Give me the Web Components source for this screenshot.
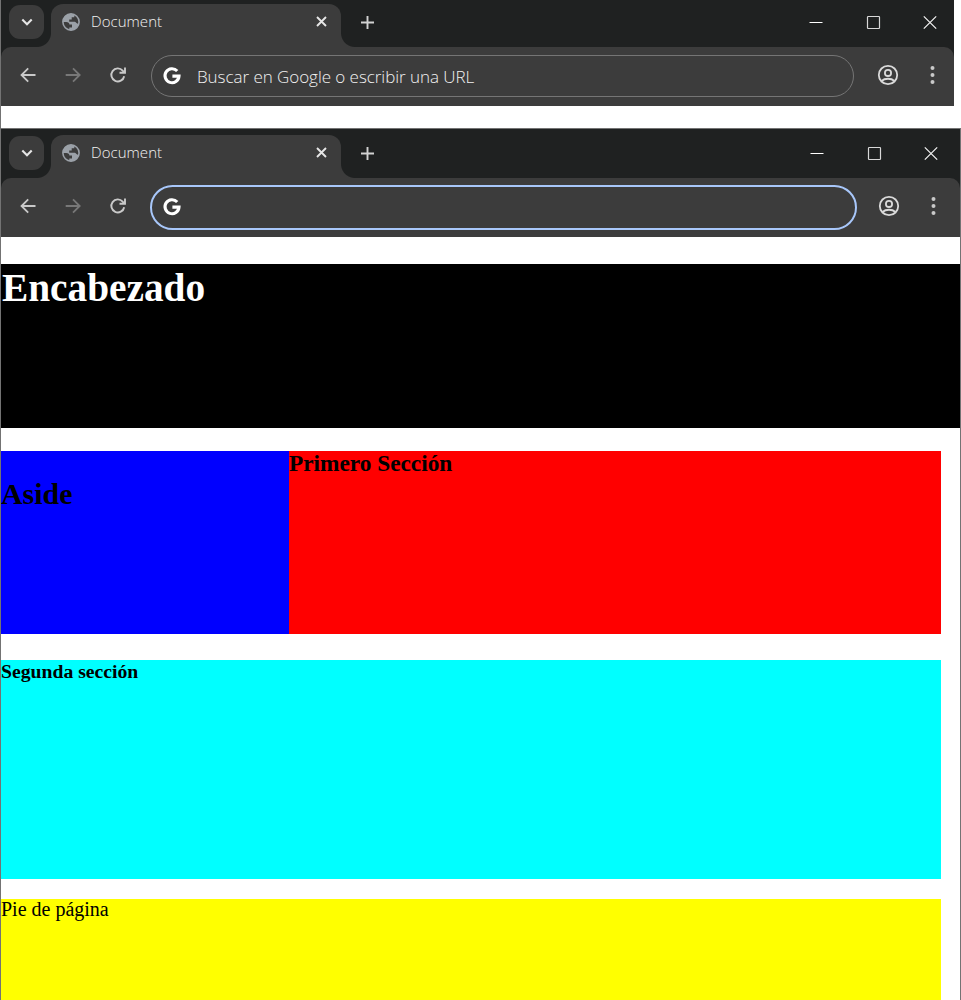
<!DOCTYPE html>
<html lang="es"><head><meta charset="utf-8"><title>Document</title>
<style>html,body{margin:0;height:1000px;overflow:hidden;background:#fff}</style></head>
<body>
<desk-view></desk-view>
<template id="chrome-t">
<style>
:host{display:block;height:108px;background:#3c3c3c;font-family:"Open Sans","Noto Sans",sans-serif;font-weight:300;color:#f2f2f2;overflow:hidden}
*{box-sizing:border-box}
svg{display:block;flex:none;overflow:visible}
.strip{display:flex;height:49px;padding-left:8px;background:#1f2121}
.down{width:35px;height:34px;margin-top:7px;border-radius:11px;background:#3c3c3c;display:grid;place-items:center}
.tab{position:relative;width:290px;height:43px;margin:6px 0 0 7px;border-radius:12px 12px 0 0;background:#3c3c3c;display:flex;align-items:center;padding:0 14.5px 7px 11px}
.tab:before,.tab:after{content:"";position:absolute;bottom:0;width:14px;height:14px}
.tab:before{left:-14px;background:radial-gradient(circle at 0 0,transparent 13.5px,#3c3c3c 14.5px)}
.tab:after{right:-14px;background:radial-gradient(circle at 100% 0,transparent 13.5px,#3c3c3c 14.5px)}
.title{font-size:15px;line-height:20px;margin-left:11px;padding-bottom:2px;flex:1;white-space:nowrap;letter-spacing:.05px}
.tab .close{margin-top:-1px}
.plus{margin:17.5px 0 0 19.5px}
.win{margin:16px 17px 0 auto;display:flex;gap:42.5px}
:host([focused]) .win{margin-right:22px}
.corner{background:#1f2121}
.bar{height:59px;background:#3c3c3c;border-radius:10px 10px 0 0;display:flex;align-items:center;padding:0 17px 1px 18px}
:host([focused]) .bar{padding-right:22px}
.nav{display:flex;gap:25px;margin:0 1px 1.5px -1px}
.url{flex:1;height:42px;margin:0 22.5px 0 22px;border:1.5px solid #757575;border-radius:21px;display:flex;align-items:center;padding-left:11px;font-size:17px;white-space:nowrap}
:host([focused]) .url{height:45px;margin:0 20.5px 0 21px;border:2.5px solid #a8c7fa;border-radius:23px}
.url span{margin-left:16px;letter-spacing:-.05px}
.end{display:flex;gap:29.5px;align-items:center;margin-bottom:1.5px}
</style>
<div class="corner"><div class="strip">
<div class="down"><svg width="12" height="8" viewBox="0 0 12 8" fill="none" stroke="#e6e6e6" stroke-width="2.1"><path d="M1.3 1.5 6 6.2l4.7-4.7"/></svg></div>
<div class="tab"><svg width="18" height="18" viewBox="0 0 18 18"><circle cx="9" cy="9" r="8.1" fill="none" stroke="#9ba1a8" stroke-width="1.6"/><path fill="#9ba1a8" d="M7.2 1.1C3.2 2 .8 5 .8 9h3.5c2 0 3.1 1 3.1 2.4H10v3H7.3v2.5c5.2 1.1 9-1.9 9.6-6.5-.9.6-1.7.2-2.4-.4-.8-.9-1.4-1.3-3.1-1.2H7.2V6.5h2.5V4.2h2.6V1.7C10.6.9 9 .7 7.2 1.1z"/></svg>
<span class="title"><slot name="title"></slot></span>
<svg class="close" width="11" height="11" viewBox="0 0 11 11" stroke="#e6e6e6" stroke-width="1.9"><path d="m1 1 9 9M10 1l-9 9"/></svg></div>
<svg class="plus" width="13" height="13" viewBox="0 0 13 13" stroke="#d2d2d2" stroke-width="1.9"><path d="M6.5 0v13M0 6.5h13"/></svg>
<div class="win">
<svg width="14" height="15" viewBox="0 0 14 15" stroke="#fff"><path d="M.5 8.5h13"/></svg>
<svg width="15" height="15" viewBox="0 0 15 15" fill="none" stroke="#d8d8d8" stroke-width="1.2"><rect x="1.5" y="2.5" width="12" height="12" rx=".7"/></svg>
<svg width="14" height="15" viewBox="0 0 14 15" stroke="#f4f4f4" stroke-width="1.2"><path d="m.8 2.3 12.4 12.4M13.2 2.3.8 14.7"/></svg>
</div></div>
<div class="bar"><div class="nav">
<svg width="20" height="20" viewBox="0 0 20 20" fill="none" stroke="#c9c9c9" stroke-width="1.8"><path d="M17.5 10H3.5M10.2 3.3 3.5 10l6.7 6.7"/></svg>
<svg width="20" height="20" viewBox="0 0 20 20" fill="none" stroke="#787878" stroke-width="1.8"><path d="M2.7 10h13.5M10 3.3l6.7 6.7-6.7 6.7"/></svg>
<svg width="20" height="20" viewBox="0 0 20 20" fill="none" stroke="#c9c9c9" stroke-width="1.9"><path d="M16.2 11.2A6.5 6.5 0 1 1 14.7 5.6l2 2M17 2.6v5.2h-5.5"/></svg></div>
<div class="url"><svg width="18" height="18" viewBox="0 0 18 18" fill="none" stroke="#fff" stroke-width="3.1"><path d="M14.2 4A7 7 0 1 0 16 9.1H9.4"/></svg><span><slot></slot></span></div>
<div class="end"><svg width="22" height="22" viewBox="0 0 22 22" fill="none" stroke="#dadada" stroke-width="1.8"><circle cx="11" cy="11" r="9.2"/><circle cx="11" cy="8.9" r="3.1"/><path d="M4.5 17c3.5-3 9.5-3 13 0"/></svg>
<svg width="9" height="20" viewBox="0 0 9 20" fill="#c9c9c9"><circle cx="4.5" cy="3" r="2"/><circle cx="4.5" cy="10" r="2"/><circle cx="4.5" cy="17" r="2"/></svg></div>
</div></div>
</template>
<template id="block-t">
<style>
:host{display:block;box-sizing:border-box;overflow:hidden;font-family:"Liberation Serif",serif;line-height:1;white-space:nowrap;color:#000}
</style><slot></slot>
</template>
<template id="desk-t">
<style>
:host{display:block;height:1000px;overflow:hidden}
.first{height:128px;border-left:1px solid #737373;overflow:hidden}
.first browser-chrome{width:953px;margin-top:-2px}
.second{height:872px;box-sizing:border-box;border:1px solid #737373;border-bottom:0;overflow:hidden}
.head{margin-top:27px;height:164px;background:#000;color:#fff;font-weight:700;font-size:39.3px;padding:5px 0 0 1px}
.row{display:flex;width:940px;height:183px;margin-top:23px}
.aside{width:288px;background:#00f;font-weight:700;font-size:29.9px;padding-top:28px}
.one{flex:1;background:#f00;font-weight:700;font-size:23.3px;padding-top:1px}
.two{width:940px;height:219px;margin-top:26px;background:#0ff;font-weight:700;font-size:19.7px;padding-top:2px}
.foot{width:940px;height:110px;margin-top:20px;background:#ff0;font-size:20px}
</style>
<div class="first"><browser-chrome><span slot="title">Document</span>Buscar en Google o escribir una URL</browser-chrome></div>
<div class="second"><browser-chrome focused><span slot="title">Document</span></browser-chrome>
<page-block class="head">Encabezado</page-block>
<div class="row"><page-block class="aside">Aside</page-block><page-block class="one">Primero Sección</page-block></div>
<page-block class="two">Segunda sección</page-block>
<page-block class="foot">Pie de página</page-block>
</div>
</template>
<script>
const define=(name,id)=>customElements.define(name,class extends HTMLElement{
 constructor(){super();this.attachShadow({mode:"open"}).append(document.getElementById(id).content.cloneNode(true));}
});
define("browser-chrome","chrome-t");
define("page-block","block-t");
define("desk-view","desk-t");
</script>
</body></html>
